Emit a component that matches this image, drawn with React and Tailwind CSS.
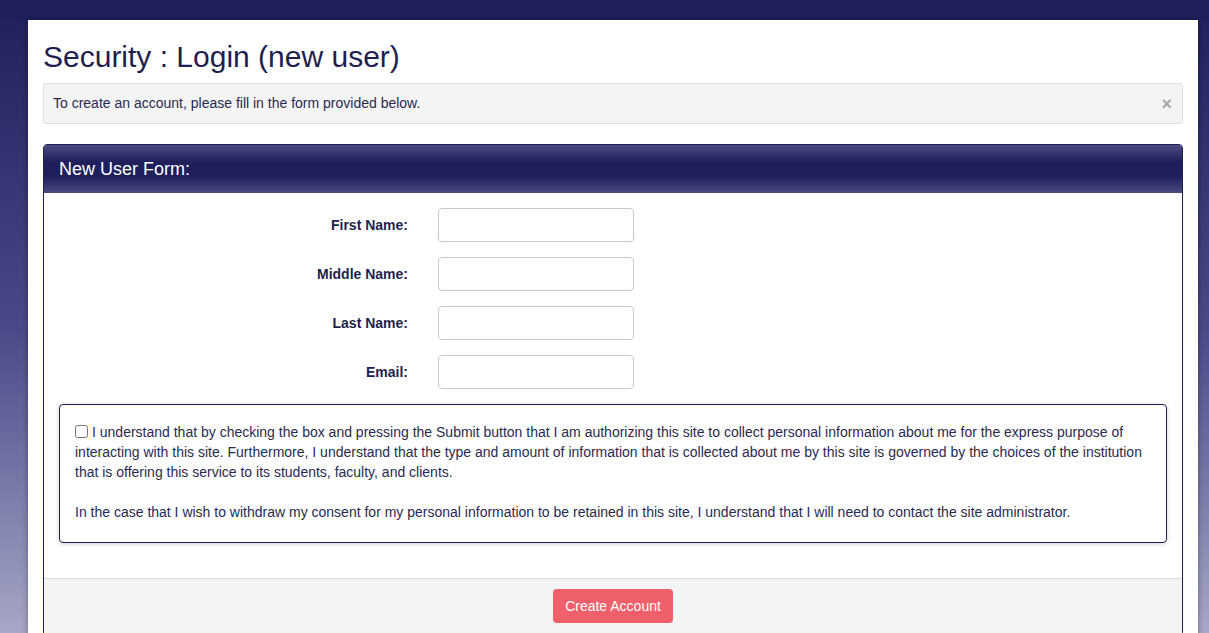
import React from "react";

const fields = ["First Name:", "Middle Name:", "Last Name:", "Email:"];

export default function App() {
    return (
        <div className="min-h-[633px] bg-gradient-to-b from-[#1f1f5b] via-[#4a4a88] to-[#b0b0cc] font-['Liberation_Sans',Arial,sans-serif] text-[#1e1f4f]">
            <div className="h-5 bg-[#1f1f5b]" />
            <div className="ml-[28px] min-h-[613px] w-[1170px] bg-white px-[15px] pb-6 pt-[19px] shadow-[0_0_6px_rgba(0,0,0,0.35)]">
                <h1 className="text-[30px] leading-[36px]">Security : Login (new user)</h1>
                <div className="mt-[8px] flex h-[41px] items-center justify-between rounded-[3px] border border-[#dedede] bg-[#f4f4f4] pl-[9px] pr-[10px] text-[14px] text-[#2a2a50]">
                    <span>To create an account, please fill in the form provided below.</span>
                    <span className="text-[18px] font-bold leading-none text-[#a8a8a8]">×</span>
                </div>

                <div className="mt-[20px] overflow-hidden rounded-[4px] border border-[#1e1f4f]">
                    <div className="flex h-[48px] items-center bg-[linear-gradient(to_bottom,#4b4b80_0%,#1f1f5b_35%,#1f1f5b_65%,#4b4b80_100%)] px-[15px] text-[18px] text-white">
                        New User Form:
                    </div>
                    <div className="px-[15px] pb-[35px] pt-[15px]">
                        <div className="flex flex-col gap-[15px]">
                            {fields.map((f) => (
                                <div key={f} className="flex items-center">
                                    <label className="w-[349px] text-right text-[14px] font-bold">{f}</label>
                                    <input type="text" className="ml-[30px] h-[34px] w-[196px] rounded-[4px] border border-[#c8c8c8] bg-white" />
                                </div>
                            ))}
                        </div>
                        <div className="mt-[15px] rounded-[4px] border border-[#1e1f4f] px-[15px] pb-[20px] pt-[17px] text-[14px] leading-[20px] text-[#2a2a50] shadow-[0_1px_4px_rgba(0,0,0,0.2)]">
                            <p>
                                <input type="checkbox" className="mr-[4px] h-[13px] w-[13px] align-[-1px]" />
                                I understand that by checking the box and pressing the Submit button that I am authorizing this site to collect personal information about me for the express purpose of interacting with this site. Furthermore, I understand that the type and amount of information that is collected about me by this site is governed by the choices of the institution that is offering this service to its students, faculty, and clients.
                            </p>
                            <p className="mt-[20px]">
                                In the case that I wish to withdraw my consent for my personal information to be retained in this site, I understand that I will need to contact the site administrator.
                            </p>
                        </div>
                    </div>
                    <div className="flex justify-center border-t border-[#dcdcdc] bg-[#f4f4f4] pb-[12px] pt-[10px]">
                        <button className="h-[34px] rounded-[4px] bg-[#f0606a] px-[12px] text-[14px] text-white">Create Account</button>
                    </div>
                </div>
            </div>
        </div>
    );
}
